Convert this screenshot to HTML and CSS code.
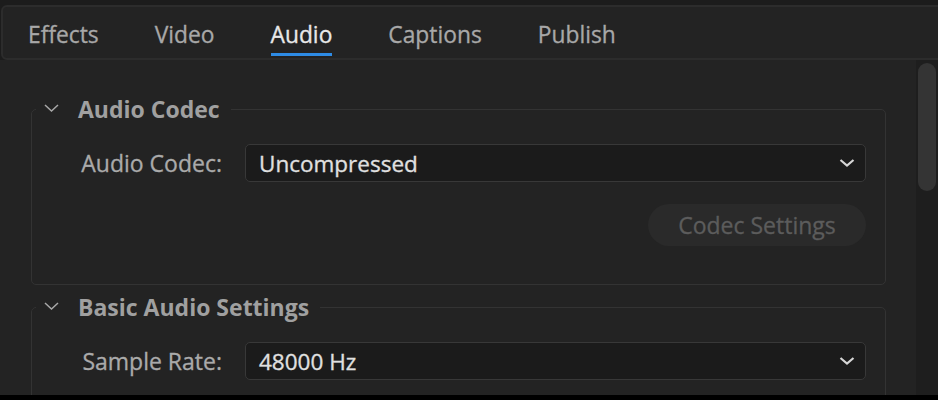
FILE: index.html
```html
<!DOCTYPE html>
<html lang="en">
<head>
<meta charset="utf-8">
<title>Export Settings</title>
<link rel="stylesheet" href="styles.css">
</head>
<body>
<div class="app">
  <nav class="tabbar">
    <span class="tab">Effects</span>
    <span class="tab">Video</span>
    <span class="tab active">Audio</span>
    <span class="tab">Captions</span>
    <span class="tab">Publish</span>
  </nav>
  <div class="main">
    <div class="content">
      <fieldset class="section">
        <legend class="section-title">
          <svg class="twisty" viewBox="0 0 15 8" width="15" height="8"><path d="M1 1 L7.5 7 L14 1" fill="none" stroke="currentColor" stroke-width="1.5"/></svg>
          <span>Audio Codec</span>
        </legend>
        <div class="row">
          <label class="label">Audio Codec:</label>
          <div class="select"><span>Uncompressed</span>
            <svg class="caret" viewBox="0 0 16 8" width="16" height="8"><path d="M1.5 1 L8 6.5 L14.5 1" fill="none" stroke="currentColor" stroke-width="2.2"/></svg>
          </div>
        </div>
        <div class="actions">
          <button class="btn" disabled>Codec Settings</button>
        </div>
      </fieldset>
      <fieldset class="section">
        <legend class="section-title">
          <svg class="twisty" viewBox="0 0 15 8" width="15" height="8"><path d="M1 1 L7.5 7 L14 1" fill="none" stroke="currentColor" stroke-width="1.5"/></svg>
          <span>Basic Audio Settings</span>
        </legend>
        <div class="row">
          <label class="label">Sample Rate:</label>
          <div class="select"><span>48000 Hz</span>
            <svg class="caret" viewBox="0 0 16 8" width="16" height="8"><path d="M1.5 1 L8 6.5 L14.5 1" fill="none" stroke="currentColor" stroke-width="2.2"/></svg>
          </div>
        </div>
      </fieldset>
    </div>
    <div class="scrollbar"><div class="thumb"></div></div>
  </div>
</div>
</body>
</html>
```
FILE: styles.css
```css
html, body {
  margin: 0;
  padding: 0;
  background: #000;
}
body {
  font-family: "Open Sans", "Noto Sans", sans-serif;
  width: 938px;
  height: 400px;
  overflow: hidden;
}
.app {
  height: 395px;
  background: #1c1c1c;
  padding-top: 5px;
  box-sizing: border-box;
  display: flex;
  flex-direction: column;
  overflow: hidden;
}
.tabbar {
  height: 55px;
  box-sizing: border-box;
  margin-left: 1px;
  margin-right: -10px;
  border: 2px solid #2c2c2c;
  border-radius: 6px;
  background: #232323;
  display: flex;
  align-items: stretch;
  padding-left: 25px;
  gap: 56px;
  flex-shrink: 0;
}
.tab {
  font-size: 22.8px;
  color: #a8a8a8;
  -webkit-text-stroke: 0.3px currentColor;
  display: flex;
  align-items: center;
  padding-top: 8px;
  border-bottom: 3px solid transparent;
  box-sizing: border-box;
  margin-bottom: 2px;
}
.tab.active {
  color: #e8e8e8;
  border-bottom-color: #2e8ce6;
}
.main {
  flex: 1;
  display: flex;
  min-height: 0;
}
.content {
  flex: 1;
  background: #232323;
  padding-top: 34px;
  overflow: hidden;
}
.scrollbar {
  width: 22px;
  background: #1e1e1e;
  padding: 3px 2px 0 2px;
  box-sizing: border-box;
  flex-shrink: 0;
}
.thumb {
  height: 128px;
  background: #343434;
  border-radius: 9px;
}
.section {
  margin: 0 30px 7px 31px;
  border: 1px solid #333;
  border-radius: 5px;
  padding: 20px 19px 38px 0;
  min-width: 0;
}
.section-title {
  display: flex;
  align-items: center;
  margin-left: 4px;
  padding: 0 11px 0 8px;
  height: 30px;
  font-size: 23px;
  font-weight: 700;
  color: #a0a0a0;
}
.twisty {
  color: #a8a8a8;
  margin-right: 19px;
  margin-top: -3px;
}
.row {
  display: grid;
  grid-template-columns: 190px 1fr;
  column-gap: 23px;
  align-items: center;
  margin-bottom: 22px;
}
.label {
  text-align: right;
  font-size: 23px;
  color: #aaaaaa;
  -webkit-text-stroke: 0.3px currentColor;
}
.select {
  height: 38px;
  box-sizing: border-box;
  background: #1b1b1b;
  border: 1px solid #383838;
  border-radius: 5px;
  display: flex;
  align-items: center;
  justify-content: space-between;
  padding: 0 10px 0 13px;
  font-size: 22.5px;
  color: #e0e0e0;
  -webkit-text-stroke: 0.3px currentColor;
}
.caret {
  color: #d6d6d6;
}
.actions {
  display: flex;
  justify-content: flex-end;
}
.btn {
  width: 218px;
  height: 42px;
  border: none;
  border-radius: 21px;
  background: #2a2a2a;
  color: #5c5c5c;
  -webkit-text-stroke: 0.3px currentColor;
  font-family: inherit;
  font-size: 23px;
  padding: 0;
}
```
